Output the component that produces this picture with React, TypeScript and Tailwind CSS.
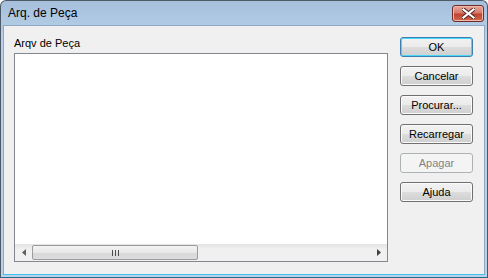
import React from "react";

const FONT = { fontFamily: '"Liberation Sans", Arial, sans-serif' };

function Button({
  label,
  primary,
  disabled,
}: {
  label: string;
  primary?: boolean;
  disabled?: boolean;
}) {
  const base =
    "relative flex h-[20px] w-[73px] items-center justify-center rounded-[3px] border text-[11px] leading-none";
  if (disabled) {
    return (
      <div className={`${base} border-[#adb2b5] bg-[#f4f4f4] text-[#838383]`}>{label}</div>
    );
  }
  return (
    <div
      className={`${base} ${
        primary
          ? "border-[#3c7fb1] shadow-[inset_0_0_0_1px_#48d8fb]"
          : "border-[#707070] shadow-[inset_0_0_0_1px_#fbfbfb]"
      } bg-[linear-gradient(#f2f2f2_0%,#ebebeb_50%,#dddddd_50%,#cfcfcf_100%)] text-black`}
    >
      {label}
    </div>
  );
}

function CloseButton() {
  return (
    <div className="flex h-[17px] w-[32px] items-center justify-center rounded-[3px] border border-[#6d2b2b] bg-[linear-gradient(#e9a99b_0%,#d57a6a_45%,#c3422f_55%,#cf6a4f_100%)] shadow-[inset_0_0_0_1px_#f0b9ab]">
      <svg width="13" height="11" viewBox="0 0 13 11">
        <path
          d="M1.5 1.5 L11.5 9.5 M11.5 1.5 L1.5 9.5"
          stroke="#4a2020"
          strokeWidth="4"
          strokeLinecap="square"
        />
        <path
          d="M1.5 1.5 L11.5 9.5 M11.5 1.5 L1.5 9.5"
          stroke="#ffffff"
          strokeWidth="2.2"
          strokeLinecap="square"
        />
      </svg>
    </div>
  );
}

function HScrollBar() {
  return (
    <div className="flex h-[17px] items-center bg-[linear-gradient(#e3e3e3,#f0f0f0_30%,#f0f0f0)]">
      <div className="flex w-[17px] items-center justify-center">
        <svg width="4" height="7" viewBox="0 0 4 7">
          <path d="M4 0 L0 3.5 L4 7 Z" fill="#606060" />
        </svg>
      </div>
      <div className="flex h-[15px] w-[166px] items-center justify-center rounded-[2px] border border-[#9b9b9b] bg-[linear-gradient(#f3f3f3,#e8e8e8_50%,#d8d8d8_50%,#dcdcdc)]">
        <svg width="7" height="6" viewBox="0 0 7 6">
          <path d="M0.5 0 V6 M3.5 0 V6 M6.5 0 V6" stroke="#4c4c4c" strokeWidth="1" />
        </svg>
      </div>
      <div className="flex-1" />
      <div className="flex w-[17px] items-center justify-center">
        <svg width="4" height="7" viewBox="0 0 4 7">
          <path d="M0 0 L4 3.5 L0 7 Z" fill="#404040" />
        </svg>
      </div>
    </div>
  );
}

export default function App() {
  return (
    <div className="h-[278px] w-[488px] bg-white" style={FONT}>
      <div className="flex h-full w-full flex-col rounded-t-[6px] border border-[#4d5967] border-b-[#1f6f8f] bg-[linear-gradient(#a6c0dc,#b9d1ea_40px,#b9d1ea)]">
        {/* title bar */}
        <div className="flex h-[24px] shrink-0 items-center justify-between pl-[7px] pr-[3px]">
          <span className="text-[12px] text-black">Arq. de Peça</span>
          <CloseButton />
        </div>

        {/* client area */}
        <div className="mx-[2px] mb-[2px] flex flex-1 border border-[#8da6c2] border-b-[#3ec4ee] bg-[#f0f0f0] pl-[10px] pr-[11px] pt-[11px]">
          <div className="flex w-[374px] flex-col">
            <div className="h-[16px] text-[11px] leading-[13px] text-black">Arqv de Peça</div>
            <div className="flex h-[209px] flex-col border border-[#828790] bg-white">
              <div className="flex-1" />
              <HScrollBar />
            </div>
          </div>
          <div className="ml-auto flex flex-col gap-[9px] pt-[0px]">
            <Button label="OK" primary />
            <Button label="Cancelar" />
            <Button label="Procurar..." />
            <Button label="Recarregar" />
            <Button label="Apagar" disabled />
            <Button label="Ajuda" />
          </div>
        </div>
      </div>
    </div>
  );
}
